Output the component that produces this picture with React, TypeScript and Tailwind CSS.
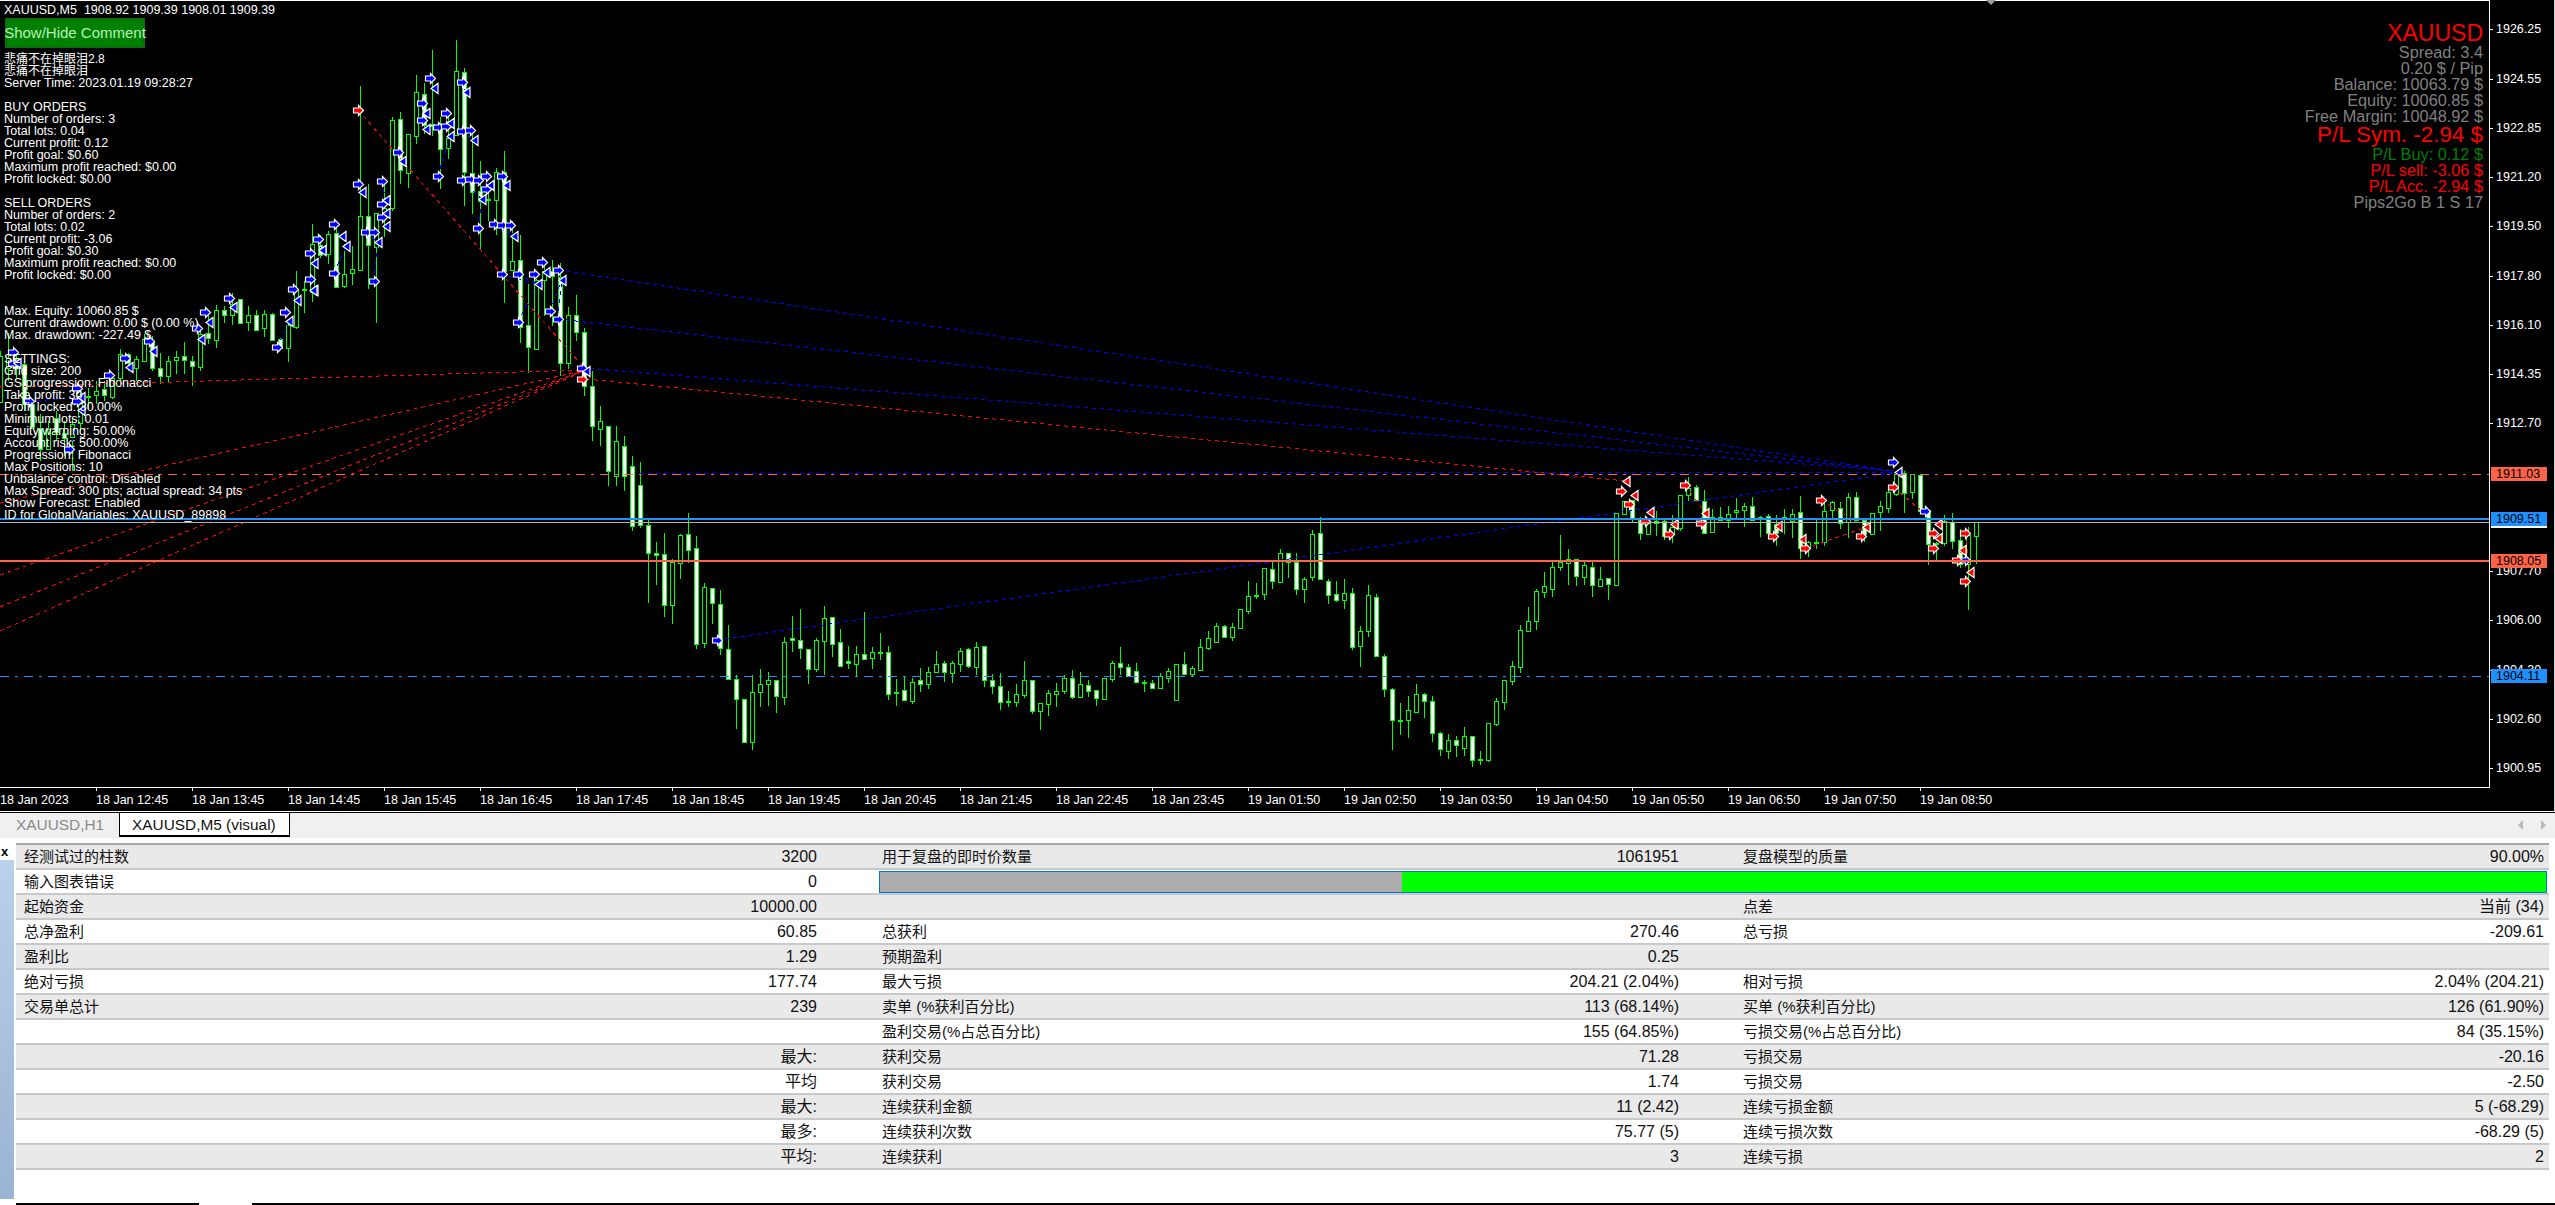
type Row = [number, number, number, number, number];

// [high, bodyTop, bodyBottom, low, filled] measured in crops of the chart
const zone = (start: number, y0: number, scale: number, rows: Row[]) =>
  rows.map((r, i) => ({
    x: (start + i) * 8,
    hi: Math.round(y0 + r[0] / scale),
    top: Math.round(y0 + r[1] / scale),
    bot: Math.round(y0 + r[2] / scale),
    lo: Math.round(y0 + r[3] / scale),
    filled: r[4] === 1,
  }));

const candles = [
  ...zone(0, 280, 3, [
    [210, 225, 362, 362, 0], [155, 230, 262, 300, 0], [215, 235, 262, 290, 1], [240, 250, 370, 390, 1],
    [370, 370, 438, 440, 1], [400, 440, 505, 540, 1], [420, 445, 505, 505, 0], [390, 410, 452, 480, 1],
    [420, 457, 472, 525, 1], [415, 428, 468, 570, 0], [320, 345, 425, 450, 0], [320, 344, 346, 385, 0],
    [300, 330, 343, 370, 0], [300, 325, 342, 360, 1], [285, 290, 348, 355, 0], [205, 220, 290, 300, 0],
    [215, 220, 245, 270, 1], [225, 235, 260, 300, 0], [160, 175, 240, 240, 0], [165, 183, 262, 270, 1],
    [215, 260, 284, 310, 1], [225, 241, 285, 305, 0], [210, 229, 238, 278, 0], [183, 226, 238, 278, 1],
    [225, 241, 256, 315, 1], [140, 160, 258, 270, 0], [95, 157, 172, 190, 1], [72, 88, 176, 200, 0],
    [75, 88, 102, 125, 1], [35, 68, 103, 133, 0], [55, 55, 125, 125, 1], [75, 103, 122, 150, 0],
    [88, 103, 146, 150, 1], [88, 98, 142, 168, 0], [95, 100, 178, 180, 1], [170, 175, 200, 205, 1],
    [120, 133, 202, 242, 0], [-30, 25, 137, 145, 0],
  ]),
  ...zone(38, 30, 3, [
    [750, 775, 778, 845, 0], [579, 640, 783, 812, 0], [612, 643, 672, 680, 1], [600, 610, 670, 698, 0],
    [570, 607, 767, 767, 1], [640, 730, 764, 770, 0], [645, 715, 727, 762, 0], [165, 556, 716, 720, 0],
    [460, 556, 643, 773, 1], [545, 547, 647, 875, 0], [458, 530, 545, 617, 0], [258, 268, 530, 540, 0],
    [243, 265, 417, 458, 1], [310, 310, 425, 470, 0], [132, 184, 316, 340, 0], [155, 190, 283, 308, 1],
    [57, 278, 286, 315, 1], [258, 295, 355, 473, 1], [250, 320, 350, 385, 0], [27, 121, 313, 315, 0],
    [111, 124, 424, 525, 1], [300, 425, 484, 548, 1], [390, 480, 510, 655, 1], [460, 505, 507, 570, 0],
    [412, 424, 506, 612, 0], [360, 424, 721, 815, 1], [570, 691, 716, 720, 0], [612, 688, 889, 935, 1],
    [760, 883, 949, 1027, 1], [745, 747, 955, 958, 0], [687, 720, 748, 855, 0], [688, 720, 736, 885, 1],
    [697, 739, 997, 1035, 1], [828, 853, 997, 1015, 0], [793, 853, 904, 930, 1],
  ]),
  ...zone(73, 0, 1, [
    [327, 331, 385, 395, 1], [370, 385, 425, 440, 1], [405, 420, 428, 445, 0], [425, 425, 470, 485, 1],
    [425, 440, 475, 485, 0], [435, 445, 475, 490, 1], [455, 465, 525, 530, 1],
  ]),
  ...zone(80, 420, 3, [
    [123, 193, 313, 320, 1], [297, 313, 397, 545, 1], [363, 397, 401, 491, 1], [337, 400, 553, 587, 1],
    [415, 424, 553, 608, 0], [340, 343, 425, 473, 0], [277, 340, 388, 425, 1], [345, 380, 670, 683, 1],
    [487, 499, 665, 680, 0], [502, 502, 545, 608, 1], [507, 550, 682, 701, 1], [612, 685, 775, 777, 1],
    [763, 775, 835, 923, 1], [835, 835, 962, 965, 1], [763, 814, 962, 986, 0], [744, 790, 812, 857, 0],
    [754, 778, 788, 855, 0], [778, 778, 824, 875, 1], [648, 664, 827, 851, 0], [586, 652, 658, 692, 1],
    [564, 658, 682, 713, 1], [685, 685, 743, 788, 1], [652, 658, 743, 753, 0], [556, 592, 661, 761, 0],
    [589, 589, 670, 707, 1], [624, 664, 734, 734, 1], [675, 721, 727, 744, 1], [675, 700, 728, 766, 0],
    [573, 700, 715, 715, 1], [678, 694, 712, 743, 0], [636, 694, 695, 717, 0], [675, 694, 818, 837, 1],
    [774, 812, 815, 855, 0], [767, 808, 836, 840, 1], [771, 784, 839, 849, 0], [741, 778, 788, 812, 1],
    [738, 754, 788, 804, 0], [690, 730, 752, 757, 0], [720, 727, 754, 782, 1], [720, 727, 755, 785, 0],
    [682, 691, 728, 753, 0], [682, 685, 734, 740, 1], [663, 679, 737, 762, 0], [676, 676, 778, 797, 1],
    [760, 778, 794, 819, 1], [757, 796, 842, 866, 1], [810, 839, 842, 857, 0], [790, 820, 842, 857, 0],
    [720, 778, 821, 831, 0], [778, 778, 871, 878, 1], [847, 847, 869, 926, 0], [808, 817, 848, 884, 0],
    [786, 811, 818, 857, 0], [763, 772, 809, 818, 0], [748, 772, 827, 833, 1], [754, 790, 827, 827, 0],
    [778, 793, 811, 827, 1], [808, 808, 832, 854, 1],
  ]),
  ...zone(138, 500, 3, [
    [532, 532, 593, 593, 0], [480, 487, 533, 543, 0], [438, 487, 499, 522, 1], [489, 499, 524, 527, 1],
    [486, 511, 544, 546, 1], [537, 544, 547, 572, 0], [537, 547, 560, 560, 1], [516, 526, 560, 560, 0],
    [501, 511, 530, 545, 0], [490, 490, 596, 596, 0], [453, 490, 518, 521, 1], [496, 502, 518, 527, 0],
    [414, 439, 506, 506, 0], [390, 412, 440, 447, 0], [366, 376, 422, 422, 0], [373, 376, 407, 412, 1],
    [366, 379, 407, 420, 0], [325, 325, 380, 384, 0], [240, 286, 329, 339, 0], [246, 283, 286, 294, 0],
    [202, 202, 278, 297, 0], [183, 205, 241, 264, 1], [144, 157, 242, 246, 0], [157, 157, 184, 231, 1],
    [156, 184, 265, 282, 1], [229, 235, 265, 306, 0], [87, 100, 229, 240, 0], [48, 97, 235, 235, 1],
    [235, 241, 283, 309, 1], [240, 280, 298, 303, 1], [235, 277, 298, 324, 0], [262, 277, 439, 447, 1],
    [376, 391, 436, 498, 0], [252, 283, 391, 408, 0], [280, 289, 466, 466, 1], [459, 466, 565, 588, 1],
    [562, 565, 658, 747, 1], [606, 658, 661, 702, 0], [585, 628, 658, 711, 0], [549, 580, 632, 636, 0],
    [577, 580, 601, 651, 1], [585, 601, 697, 723, 1], [693, 697, 745, 765, 1], [699, 718, 749, 774, 0],
    [705, 718, 733, 768, 1], [678, 706, 740, 765, 0], [706, 706, 778, 798, 1], [750, 775, 778, 792, 0],
    [667, 667, 778, 783, 0], [591, 601, 670, 675, 0], [537, 538, 604, 627, 0], [480, 496, 541, 552, 0],
    [373, 388, 497, 516, 0], [318, 361, 391, 391, 0], [264, 271, 361, 387, 0], [213, 256, 274, 291, 0],
    [183, 199, 265, 288, 0], [102, 184, 199, 209, 0], [144, 175, 187, 252, 0], [175, 175, 226, 255, 1],
  ]),
  ...zone(198, 430, 3, [
    [393, 403, 437, 462, 0], [393, 407, 463, 497, 1], [408, 445, 464, 467, 0], [440, 442, 460, 507, 1],
    [247, 247, 463, 463, 0], [210, 210, 250, 250, 0], [207, 207, 262, 272, 1], [258, 268, 307, 327, 1],
    [265, 277, 308, 313, 0], [240, 271, 277, 315, 0], [268, 271, 316, 326, 1], [252, 289, 310, 335, 0],
    [193, 193, 290, 300, 0], [138, 172, 193, 210, 0], [162, 169, 208, 213, 1], [177, 211, 307, 310, 1],
    [234, 257, 304, 305, 0], [228, 257, 268, 268, 1], [225, 250, 268, 290, 0], [201, 238, 244, 262, 0],
    [217, 226, 238, 288, 0], [199, 226, 267, 267, 1], [255, 257, 262, 317, 0], [250, 254, 307, 310, 1],
    [252, 280, 305, 345, 1], [235, 259, 262, 310, 0], [235, 250, 270, 320, 0], [195, 244, 352, 384, 1],
    [330, 332, 351, 378, 0], [267, 334, 337, 354, 0], [210, 241, 334, 346, 0], [210, 214, 238, 262, 0],
    [213, 230, 277, 295, 1], [186, 199, 274, 320, 0], [183, 199, 268, 277, 1], [268, 268, 310, 334, 1],
    [247, 247, 310, 312, 0], [210, 226, 244, 300, 0], [165, 184, 230, 246, 0], [130, 130, 190, 195, 0],
    [120, 127, 187, 246, 1], [130, 130, 184, 205, 0], [130, 133, 241, 241, 1], [238, 238, 340, 402, 1],
    [333, 335, 338, 388, 0], [252, 271, 337, 346, 0], [246, 274, 331, 355, 1], [295, 328, 400, 410, 1],
    [289, 313, 400, 537, 0], [274, 274, 316, 400, 0],
  ]),
];

type Pt = [number, number];
const crop = (ox: number, oy: number, pts: Pt[]): Pt[] => pts.map(([x, y]) => [ox + x / 3, oy + y / 3]);

const blueOpen: Pt[] = [
  ...crop(300, 30, [[390, 142], [365, 217], [365, 268], [437, 247], [413, 289], [437, 286], [485, 153], [485, 301], [511, 297], [293, 364], [413, 436], [245, 451], [173, 460], [245, 520], [245, 559], [197, 604], [221, 604], [101, 580], [53, 625], [29, 667], [101, 727], [29, 745], [221, 751], [485, 448], [509, 445], [533, 448], [557, 436], [605, 436], [557, 475], [533, 592], [581, 580], [605, 583], [629, 583], [605, 730], [653, 730], [701, 730], [725, 694], [773, 718], [653, 874], [749, 841], [773, 865], [845, 1011]]),
  ...crop(0, 280, [[688, 52], [616, 94], [592, 142], [448, 181], [832, 199], [856, 94], [880, 25], [376, 232], [328, 283], [232, 322], [232, 360], [88, 361], [40, 214], [208, 505], [40, 245]]),
  ...crop(1550, 430, [[1030, 94], [1126, 241], [1246, 388]]),
  ...crop(640, 420, [[232, 658]]),
];
const blueClose: Pt[] = [
  ...crop(300, 30, [[402, 172], [378, 247], [450, 277], [378, 295], [450, 316], [498, 184], [522, 328], [570, 463], [546, 505], [618, 463], [305, 391], [186, 484], [258, 508], [258, 547], [258, 586], [233, 634], [125, 616], [138, 646], [41, 697], [41, 778], [65, 657], [641, 616], [713, 760], [737, 724], [785, 748], [857, 1020]]),
  ...crop(0, 280, [[700, 79], [628, 124], [604, 175], [460, 211], [388, 259], [892, 58], [868, 121], [940, 28], [244, 349], [244, 388], [52, 247]]),
  ...crop(1550, 430, [[1044, 124]]),
];
const redOpen: Pt[] = [
  ...crop(300, 30, [[173, 238], [845, 1045]]),
  ...crop(1550, 430, [[214, 181], [238, 220], [286, 271], [358, 310], [406, 163], [454, 277], [670, 316], [766, 352], [814, 208], [934, 316], [1030, 169], [1150, 307], [1150, 352], [1246, 307], [1222, 388], [1246, 451]]),
];
const redClose: Pt[] = crop(1550, 430, [[228, 151], [252, 193], [300, 244], [372, 280], [466, 247], [684, 286], [756, 325], [948, 289], [1164, 280], [1164, 322], [1236, 358], [1260, 424]]);

// each open arrow is tied to the closest close marker after it
const links = (open: Pt[], close: Pt[]) =>
  open.flatMap((o) => {
    const next = close
      .filter((c) => c[0] > o[0])
      .sort((a, b) => Math.hypot(a[0] - o[0], a[1] - o[1]) - Math.hypot(b[0] - o[0], b[1] - o[1]))[0];
    return next && Math.hypot(next[0] - o[0], next[1] - o[1]) < 90 ? [[o, next] as [Pt, Pt]] : [];
  });

const longBlue: [Pt, Pt][] = [
  [[558, 269], [1893, 470]],
  [[558, 318], [1893, 470]],
  [[582, 367], [1893, 470]],
  [[717, 639], [1897, 472]],
  [[640, 473], [1893, 471]],
];
const longRed: [Pt, Pt][] = [
  [[358, 109], [586, 369]],
  [[586, 378], [1626, 480]],
  [[0, 386], [586, 369]],
  [[0, 502], [586, 369]],
  [[0, 574], [586, 369]],
  [[0, 606], [586, 369]],
  [[0, 630], [586, 369]],
];

const DashLines = ({ lines, color }: { lines: [Pt, Pt][]; color: string }) => (
  <>
    {lines.map(([a, b], i) => (
      <line key={i} x1={a[0]} y1={a[1]} x2={b[0]} y2={b[1]} stroke={color} strokeWidth={1} strokeDasharray="4 4" />
    ))}
  </>
);

const ArrowMark = ({ p, color }: { p: Pt; color: string }) => {
  const x = Math.round(p[0]) + 0.5;
  const y = Math.round(p[1]) + 0.5;
  return (
    <polygon
      points={`${x - 5},${y - 2.5} ${x},${y - 2.5} ${x},${y - 5} ${x + 5},${y} ${x},${y + 5} ${x},${y + 2.5} ${x - 5},${y + 2.5}`}
      fill={color}
      stroke="#fff"
      strokeWidth={1.2}
    />
  );
};

const CloseMark = ({ p, color }: { p: Pt; color: string }) => {
  const x = Math.round(p[0]) + 0.5;
  const y = Math.round(p[1]) + 0.5;
  return <polygon points={`${x + 3.5},${y - 5} ${x + 3.5},${y + 5} ${x - 3.5},${y}`} fill={color} stroke="#fff" strokeWidth={1.2} />;
};

const PriceChart = () => (
  <svg width={2489} height={787} className="block">
    <g shapeRendering="crispEdges">
      {candles.map((c) => (
        <g key={c.x}>
          <line x1={c.x + 0.5} x2={c.x + 0.5} y1={c.hi} y2={c.lo} stroke="#00ff00" />
          <rect x={c.x - 1.5} y={c.top + 0.5} width={4} height={Math.max(c.bot - c.top, 1)} fill={c.filled ? "#fff" : "#000"} stroke="#00ff00" />
        </g>
      ))}
    </g>
    <g shapeRendering="crispEdges">
      <DashLines lines={longBlue} color="#0000ff" />
      <DashLines lines={links(blueOpen, blueClose)} color="#0000ff" />
      <DashLines lines={longRed} color="#ff0000" />
      <DashLines lines={links(redOpen, redClose)} color="#ff0000" />
    </g>
    {blueOpen.map((p, i) => <ArrowMark key={i} p={p} color="#0000ff" />)}
    {blueClose.map((p, i) => <CloseMark key={i} p={p} color="#0000ff" />)}
    {redOpen.map((p, i) => <ArrowMark key={i} p={p} color="#ff0000" />)}
    {redClose.map((p, i) => <CloseMark key={i} p={p} color="#ff0000" />)}
    <g shapeRendering="crispEdges">
      <line x1={0} x2={2489} y1={473.5} y2={473.5} stroke="#ff6347" strokeDasharray="9 6 3 6" />
      <line x1={0} x2={2489} y1={675.5} y2={675.5} stroke="#1e90ff" strokeDasharray="9 6 3 6" />
      <line x1={0} x2={2489} y1={521.5} y2={521.5} stroke="#b0b0b0" />
      <line x1={0} x2={2489} y1={518} y2={518} stroke="#1e90ff" strokeWidth={2} />
      <line x1={0} x2={2489} y1={560} y2={560} stroke="#ff6347" strokeWidth={2} />
    </g>
  </svg>
);

const commentLines = [
  "Server Time: 2023.01.19 09:28:27",
  "",
  "BUY ORDERS",
  "Number of orders: 3",
  "Total lots: 0.04",
  "Current profit: 0.12",
  "Profit goal: $0.60",
  "Maximum profit reached: $0.00",
  "Profit locked: $0.00",
  "",
  "SELL ORDERS",
  "Number of orders: 2",
  "Total lots: 0.02",
  "Current profit: -3.06",
  "Profit goal: $0.30",
  "Maximum profit reached: $0.00",
  "Profit locked: $0.00",
  "",
  "",
  "Max. Equity: 10060.85 $",
  "Current drawdown: 0.00 $ (0.00 %)",
  "Max. drawdown: -227.49 $",
  "",
  "SETTINGS:",
  "Grid size: 200",
  "GS progression: Fibonacci",
  "Take profit: 30",
  "Profit locked: 30.00%",
  "Minimum lots: 0.01",
  "Equity warning: 50.00%",
  "Account risk: 500.00%",
  "Progression: Fibonacci",
  "Max Positions: 10",
  "Unbalance control: Disabled",
  "Max Spread: 300 pts; actual spread: 34 pts",
  "Show Forecast: Enabled",
  "ID for GlobalVariables: XAUUSD_89898",
];

const infoLines = [
  { text: "XAUUSD", cls: "text-[23px] leading-[21px] text-[#ff0000]" },
  { text: "Spread: 3.4", cls: "text-[16.3px] leading-[16px] text-[#808080]" },
  { text: "0.20 $ / Pip", cls: "text-[16.3px] leading-[16px] text-[#808080]" },
  { text: "Balance: 10063.79 $", cls: "text-[16.3px] leading-[16px] text-[#808080]" },
  { text: "Equity: 10060.85 $", cls: "text-[16.3px] leading-[16px] text-[#808080]" },
  { text: "Free Margin: 10048.92 $", cls: "text-[16.3px] leading-[16px] text-[#808080]" },
  { text: "P/L Sym. -2.94 $", cls: "text-[22.4px] leading-[22px] text-[#ff0000]" },
  { text: "P/L Buy: 0.12 $", cls: "text-[16.3px] leading-[16px] text-[#008000]" },
  { text: "P/L sell: -3.06 $", cls: "text-[16.3px] leading-[16px] text-[#ff0000]" },
  { text: "P/L Acc. -2.94 $", cls: "text-[16.3px] leading-[16px] text-[#ff0000]" },
  { text: "Pips2Go B 1 S 17", cls: "text-[16.3px] leading-[16px] text-[#808080]" },
];

const priceTicks = [
  ["1926.25", 29], ["1924.55", 79], ["1922.85", 128], ["1921.20", 177], ["1919.50", 226], ["1917.80", 276],
  ["1916.10", 325], ["1914.35", 374], ["1912.70", 423], ["1907.70", 571], ["1906.00", 620], ["1904.30", 670],
  ["1902.60", 719], ["1900.95", 768],
] as const;

const priceTags = [
  { text: "1911.03", top: 467, cls: "bg-[#ff6347] h-[14px]" },
  { text: "1909.51", top: 512, cls: "bg-[#1e90ff] h-[16px] border-b-2 border-white" },
  { text: "1908.05", top: 554, cls: "bg-[#ff6347] h-[14px]" },
  { text: "1904.11", top: 669, cls: "bg-[#1e90ff] h-[14px]" },
];

const timeLabels = [
  "18 Jan 2023", "18 Jan 12:45", "18 Jan 13:45", "18 Jan 14:45", "18 Jan 15:45", "18 Jan 16:45", "18 Jan 17:45",
  "18 Jan 18:45", "18 Jan 19:45", "18 Jan 20:45", "18 Jan 21:45", "18 Jan 22:45", "18 Jan 23:45", "19 Jan 01:50",
  "19 Jan 02:50", "19 Jan 03:50", "19 Jan 04:50", "19 Jan 05:50", "19 Jan 06:50", "19 Jan 07:50", "19 Jan 08:50",
];

type ReportRow = [string, string, string, string, string, string];

const reportRows: ReportRow[] = [
  ["经测试过的柱数", "3200", "用于复盘的即时价数量", "1061951", "复盘模型的质量", "90.00%"],
  ["输入图表错误", "0", "", "", "", ""],
  ["起始资金", "10000.00", "", "", "点差", "当前 (34)"],
  ["总净盈利", "60.85", "总获利", "270.46", "总亏损", "-209.61"],
  ["盈利比", "1.29", "预期盈利", "0.25", "", ""],
  ["绝对亏损", "177.74", "最大亏损", "204.21 (2.04%)", "相对亏损", "2.04% (204.21)"],
  ["交易单总计", "239", "卖单 (%获利百分比)", "113 (68.14%)", "买单 (%获利百分比)", "126 (61.90%)"],
  ["", "", "盈利交易(%占总百分比)", "155 (64.85%)", "亏损交易(%占总百分比)", "84 (35.15%)"],
  ["", "最大:", "获利交易", "71.28", "亏损交易", "-20.16"],
  ["", "平均", "获利交易", "1.74", "亏损交易", "-2.50"],
  ["", "最大:", "连续获利金额", "11 (2.42)", "连续亏损金额", "5 (-68.29)"],
  ["", "最多:", "连续获利次数", "75.77 (5)", "连续亏损次数", "-68.29 (5)"],
  ["", "平均:", "连续获利", "3", "连续亏损", "2"],
];

const Cell = ({ label, value, cls }: { label: string; value: string; cls: string }) => (
  <div className={`flex items-center justify-between ${cls}`}>
    <span className="text-[15px]">{label}</span>
    <span className="text-[16px] whitespace-nowrap">{value}</span>
  </div>
);

export default function App() {
  return (
    <div className="w-[2555px] h-[1205px] flex flex-col overflow-hidden bg-white text-[#111] font-['Liberation_Sans','Noto_Sans_CJK_SC',sans-serif]">
      {/* chart window */}
      <div className="relative h-[811px] bg-black shrink-0 border-r border-[#cfcfcf]">
        <div className="h-[788px] w-[2490px] border-t border-r border-b border-white overflow-hidden">
          <PriceChart />
        </div>

        <div className="flex h-[22px] text-white text-[12.5px]">
          {timeLabels.map((t, i) => (
            <div key={t} className="relative w-[96px] shrink-0 whitespace-nowrap pt-[3px]">
              {i > 0 && <span className="absolute left-0 -top-[1px] w-px h-[4px] bg-white" />}
              {t}
            </div>
          ))}
        </div>

        <span className="absolute top-0 left-[1986px] w-0 h-0 border-l-[5px] border-r-[5px] border-t-[5px] border-l-transparent border-r-transparent border-t-[#9a9a9a]" />

        {/* overlays on the chart */}
        <div className="absolute left-[4px] top-[4px] text-white text-[12.5px] leading-[12px] whitespace-pre">XAUUSD,M5  1908.92 1909.39 1908.01 1909.39</div>
        <div className="absolute left-[5px] top-[18px] w-[140px] h-[30px] bg-[#008000] border-2 border-[#0a6e0a] flex items-center justify-center text-[15px] text-[#b8f0b8] whitespace-nowrap">Show/Hide Comment</div>

        <div className="absolute left-[4px] top-[53px] text-white text-[12.5px] leading-[12px]">
          <div className="h-[12px] text-[12px] whitespace-pre">悲痛不在掉眼泪2.8</div>
          <div className="h-[12px] text-[12px] whitespace-pre">悲痛不在掉眼泪</div>
          {commentLines.map((line, i) => (
            <div key={i} className="h-[12px] whitespace-pre">{line}</div>
          ))}
        </div>

        <div className="absolute right-[71px] top-[23px] flex flex-col items-end whitespace-pre">
          {infoLines.map((l) => (
            <div key={l.text} className={l.cls}>{l.text}</div>
          ))}
        </div>

        {/* price axis */}
        {priceTicks.map(([p, y]) => (
          <div key={p} className="absolute left-[2490px] flex items-center text-white text-[12.5px] leading-[14px]" style={{ top: y - 7 }}>
            <span className="w-[3px] h-px bg-white mr-[3px]" />
            {p}
          </div>
        ))}
        {priceTags.map((t) => (
          <div key={t.text} className={`absolute left-[2491px] w-[56px] pl-[5px] text-black text-[12.5px] leading-[14px] ${t.cls}`} style={{ top: t.top }}>
            {t.text}
          </div>
        ))}
      </div>

      <div className="h-[1px] bg-white shrink-0" />
      <div className="h-[1px] bg-black shrink-0" />

      {/* tab strip */}
      <div className="h-[25px] bg-[#f0f0f0] flex items-start shrink-0">
        <div className="w-[119px] h-[24px] pl-[16px] text-[15.4px] leading-[24px] text-[#8a8a8a] whitespace-nowrap">XAUUSD,H1</div>
        <div className="w-[171px] h-[24px] pl-[12px] bg-white border-x border-b-2 border-black text-[15.4px] leading-[24px] whitespace-nowrap">XAUUSD,M5 (visual)</div>
        <div className="ml-auto mr-[8px] flex gap-[18px] items-center h-[24px]">
          <svg width="6" height="12"><polygon points="6,1 6,11 1,6" fill="#b8b8b8" /></svg>
          <svg width="6" height="12"><polygon points="0,1 0,11 5,6" fill="#b8b8b8" /></svg>
        </div>
      </div>

      <div className="h-[5px] bg-white shrink-0" />

      <div className="flex flex-1 min-h-0">
        {/* docked terminal side strip */}
        <div className="w-[16px] flex flex-col shrink-0 bg-white">
          <div className="h-[17px] pl-[1px] text-[13px] leading-[17px] font-bold text-black">x</div>
          <div className="h-[339px] w-[14px] bg-gradient-to-b from-[#b9d1ea] to-[#99b4d1]" />
        </div>

        <div className="flex-1 flex flex-col min-w-0">
          <div className="w-[2533px] border-t-2 border-[#a8a8a8]">
            {reportRows.map((row, i) =>
              i === 1 ? (
                <div key={i} className="grid grid-cols-[859px_1674px] h-[25px] bg-white border-b-2 border-[#c8c8c8] text-[#111]">
                  <Cell label={row[0]} value={row[1]} cls="pl-[8px] pr-[58px]" />
                  <div className="pl-[4px] pr-[2px] pt-[1px]">
                    <div className="flex h-[22px] border border-[#0078d7]">
                      <div className="w-[522px] bg-[#adadad]" />
                      <div className="flex-1 bg-[#00ff00]" />
                    </div>
                  </div>
                </div>
              ) : (
                <div key={i} className={`grid grid-cols-[859px_861px_813px] h-[25px] border-b-2 border-[#c8c8c8] ${i % 2 === 0 ? "bg-[#e9e9e9]" : "bg-white"}`}>
                  <Cell label={row[0]} value={row[1]} cls="pl-[8px] pr-[58px]" />
                  <Cell label={row[2]} value={row[3]} cls="pl-[7px] pr-[57px]" />
                  <Cell label={row[4]} value={row[5]} cls="pl-[7px] pr-[5px]" />
                </div>
              )
            )}
          </div>

          <div className="flex-1" />
          <div className="flex h-[2px]">
            <div className="w-[183px] bg-black" />
            <div className="w-[53px]" />
            <div className="flex-1 bg-black" />
          </div>
        </div>
      </div>
    </div>
  );
}
